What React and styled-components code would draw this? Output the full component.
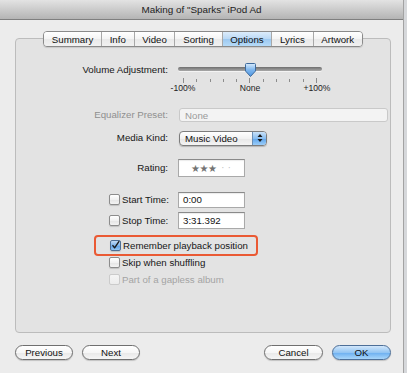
import React from 'react';
import styled, { createGlobalStyle } from 'styled-components';

const GlobalStyle = createGlobalStyle`
	html, body {
		margin: 0;
		padding: 0;
		background: #d6d8db;
	}
	body {
		font-family: "Liberation Sans", Arial, sans-serif;
		font-size: 9.7px;
		color: #161616;
	}
	* {
		box-sizing: border-box;
	}
`;

const Window = styled.div`
	width: 404px;
	height: 373px;
	background: #ececec;
	border-right: 1px solid #a3a3a3;
	display: flex;
	flex-direction: column;
`;

const TitleBar = styled.div`
	height: 20px;
	flex: none;
	display: flex;
	align-items: center;
	justify-content: center;
	background: linear-gradient(#e3e3e3, #b4b4b4);
	border-bottom: 1px solid #7f7f7f;
	color: #222;
	font-size: 9.9px;
`;

const Body = styled.div`
	padding: 11px 12px 0 15px;
	display: flex;
	flex-direction: column;
`;

const TabBar = styled.div`
	position: relative;
	z-index: 1;
	align-self: center;
	display: flex;
	height: 16px;
	margin-bottom: -9px;
	border: 1px solid #8a8a8a;
	border-radius: 4px;
	overflow: hidden;
	box-shadow: 0 1px 1px rgba(0, 0, 0, 0.12);
`;

const Tab = styled.div`
	display: flex;
	align-items: center;
	padding: 0 7.7px;
	color: #111;
	background: ${(p) =>
		p.$active
			? 'linear-gradient(#dcecfb, #b9d8f5 50%, #9cc8f0 51%, #b6dbf8)'
			: 'linear-gradient(#ffffff, #f4f4f4 50%, #e9e9e9 51%, #f1f1f1)'};
	& + & {
		border-left: 1px solid #a8a8a8;
	}
`;

const Panel = styled.div`
	height: 295px;
	background: #e3e3e3;
	border: 1px solid #bcbcbc;
	border-radius: 4px;
	padding-top: 21px;
	display: flex;
	flex-direction: column;
`;

const Row = styled.div`
	display: flex;
	align-items: ${(p) => (p.$top ? 'flex-start' : 'center')};
	height: ${(p) => p.$h}px;
	margin-top: ${(p) => p.$mt || 0}px;
`;

const Label = styled.div`
	width: 152px;
	flex: none;
	text-align: right;
	line-height: 20px;
	color: ${(p) => (p.$disabled ? '#8f8f8f' : '#161616')};
`;

const Control = styled.div`
	margin-left: ${(p) => (p.$flush ? 0 : 10)}px;
	display: flex;
	align-items: center;
`;

const Slider = styled.div`
	position: relative;
	width: 144px;
	height: 34px;
`;

const Track = styled.div`
	position: absolute;
	left: 0;
	right: 0;
	top: 7px;
	height: 4px;
	border-radius: 2px;
	background: linear-gradient(#6f6f6f, #a9a9a9);
	box-shadow: 0 1px 0 rgba(255, 255, 255, 0.6);
`;

const Knob = styled.svg`
	position: absolute;
	left: 66px;
	top: 3px;
`;

const Ticks = styled.div`
	position: absolute;
	left: 5px;
	right: 5px;
	top: 18px;
	display: flex;
	justify-content: space-between;
`;

const Tick = styled.div`
	width: 1px;
	height: ${(p) => (p.$major ? 5 : 3)}px;
	margin-top: ${(p) => (p.$major ? 0 : 1)}px;
	background: #8c8c8c;
`;

const TickLabels = styled.div`
	position: absolute;
	left: -10px;
	right: -10px;
	top: 23px;
	display: flex;
	justify-content: space-between;
	font-size: 8.6px;
	color: #222;
`;

const TickLabel = styled.span`
	width: 30px;
	text-align: center;
`;

const DisabledPopup = styled.div`
	width: 209px;
	height: 14px;
	margin-left: 1px;
	padding-left: 5px;
	display: flex;
	align-items: center;
	background: #f3f3f3;
	border: 1px solid #c9c9c9;
	border-radius: 3px;
	color: #9a9a9a;
`;

const Popup = styled.div`
	width: 88px;
	height: 15px;
	margin-left: 1px;
	display: flex;
	border: 1px solid #7c7c7c;
	border-radius: 4px;
	overflow: hidden;
	background: linear-gradient(#ffffff, #f2f2f2 50%, #e6e6e6 51%, #f4f4f4);
	box-shadow: 0 1px 1px rgba(0, 0, 0, 0.2);
`;

const PopupText = styled.div`
	flex: 1;
	display: flex;
	align-items: center;
	padding-left: 5px;
	color: #111;
`;

const PopupArrows = styled.div`
	width: 14px;
	display: flex;
	align-items: center;
	justify-content: center;
	background: linear-gradient(#c9e1f8, #88bdf0 50%, #5ea5ec 51%, #9ccdf8);
	border-left: 1px solid #6b8fb5;
`;

const Field = styled.div`
	width: 67px;
	height: ${(p) => p.$h}px;
	display: flex;
	align-items: center;
	padding-left: 4px;
	background: #ffffff;
	border: 1px solid #a9a9a9;
	border-top-color: #8a8a8a;
	box-shadow: inset 0 1px 1px rgba(0, 0, 0, 0.08);
	color: #111;
`;

const Stars = styled.span`
	margin-left: 8px;
	font-family: "DejaVu Sans", sans-serif;
	font-size: 10px;
	letter-spacing: -0.5px;
	color: #737373;
`;

const Dots = styled.span`
	margin-left: 5px;
	font-family: "DejaVu Sans", sans-serif;
	font-size: 8px;
	letter-spacing: 4px;
	color: #b9b9b9;
`;

const CheckLabel = styled.label`
	display: flex;
	align-items: center;
	gap: 2px;
	color: ${(p) => (p.$disabled ? '#a3a3a3' : '#161616')};
`;

const CheckCell = styled.div`
	width: 162px;
	flex: none;
	padding-left: 93px;
	display: flex;
	align-items: center;
`;

const Box = styled.span`
	width: 11px;
	height: 11px;
	flex: none;
	display: flex;
	align-items: center;
	justify-content: center;
	border-radius: 2px;
	border: 1px solid ${(p) => (p.$checked ? '#4f6f94' : p.$disabled ? '#cbcbcb' : '#8c8c8c')};
	background: ${(p) =>
		p.$checked
			? 'linear-gradient(#c3dcf6, #7fb5ec 50%, #5b9fe6 51%, #94c7f5)'
			: p.$disabled
			? 'linear-gradient(#f5f5f5, #ececec)'
			: 'linear-gradient(#ffffff, #f1f1f1 50%, #e4e4e4 51%, #f3f3f3)'};
	box-shadow: ${(p) => (p.$disabled ? 'none' : '0 1px 1px rgba(0, 0, 0, 0.15)')};
`;

const Highlight = styled.div`
	width: 164px;
	height: 21px;
	margin-left: 78px;
	margin-top: 6px;
	padding-left: 14px;
	display: flex;
	align-items: center;
	border: 2px solid #ea5a34;
	border-radius: 4px;
`;

const Plain = styled.div`
	padding-left: 93px;
	display: flex;
	align-items: center;
	height: ${(p) => p.$h}px;
	margin-top: ${(p) => p.$mt || 0}px;
`;

const ButtonBar = styled.div`
	margin-top: 12px;
	display: flex;
	justify-content: space-between;
`;

const Group = styled.div`
	display: flex;
	gap: 9px;
`;

const Button = styled.button`
	width: ${(p) => p.$w}px;
	height: 15px;
	padding: 0;
	font: inherit;
	color: #111;
	border-radius: 8px;
	border: 1px solid ${(p) => (p.$primary ? '#4d6f98' : '#6f6f6f')};
	background: ${(p) =>
		p.$primary
			? 'linear-gradient(#d2e7fb, #93c5f3 50%, #6aaef0 51%, #a9d6fa)'
			: 'linear-gradient(#ffffff, #f6f6f6 50%, #e8e8e8 51%, #f5f5f5)'};
	box-shadow: 0 1px 1px rgba(0, 0, 0, 0.18);
`;

function Check({ checked, disabled }) {
	return (
		<Box $checked={checked} $disabled={disabled}>
			{checked && (
				<svg width="11" height="11" viewBox="0 0 11 11">
					<path d="M2.3 5.6 L4.4 8.4 L9.6 0.8" fill="none" stroke="#1a1a1a" strokeWidth="1.7" strokeLinecap="round" strokeLinejoin="round" />
				</svg>
			)}
		</Box>
	);
}

const tabs = ['Summary', 'Info', 'Video', 'Sorting', 'Options', 'Lyrics', 'Artwork'];

export default function App() {
	const ticks = Array.from({ length: 11 }, (_, i) => i);
	return (
		<>
			<GlobalStyle />
			<Window>
				<TitleBar>Making of "Sparks" iPod Ad</TitleBar>
				<Body>
					<TabBar>
						{tabs.map((t) => (
							<Tab key={t} $active={t === 'Options'}>
								{t}
							</Tab>
						))}
					</TabBar>
					<Panel>
						<Row $h={34} $top>
							<Label>Volume Adjustment:</Label>
							<Control>
								<Slider>
									<Track />
									<Ticks>
										{ticks.map((i) => (
											<Tick key={i} $major={i === 0 || i === 5 || i === 10} />
										))}
									</Ticks>
									<TickLabels>
										<TickLabel>-100%</TickLabel>
										<TickLabel>None</TickLabel>
										<TickLabel>+100%</TickLabel>
									</TickLabels>
									<Knob width="13" height="15" viewBox="0 0 13 15">
										<defs>
											<linearGradient id="kg" x1="0" y1="0" x2="0" y2="1">
												<stop offset="0" stopColor="#d8ebfc" />
												<stop offset="0.5" stopColor="#7db6ee" />
												<stop offset="1" stopColor="#4d94e0" />
											</linearGradient>
										</defs>
										<path d="M1.5 1.5 Q1.5 0.5 2.5 0.5 H10.5 Q11.5 0.5 11.5 1.5 V8 L6.5 13.5 L1.5 8 Z" fill="url(#kg)" stroke="#3e6a9c" strokeWidth="1" />
									</Knob>
								</Slider>
							</Control>
						</Row>
						<Row $h={16} $mt={13}>
							<Label $disabled>Equalizer Preset:</Label>
							<Control>
								<DisabledPopup>None</DisabledPopup>
							</Control>
						</Row>
						<Row $h={16} $mt={7}>
							<Label>Media Kind:</Label>
							<Control>
								<Popup>
									<PopupText>Music Video</PopupText>
									<PopupArrows>
										<svg width="6" height="10" viewBox="0 0 6 10">
											<path d="M3 1 L5.5 4 H0.5 Z M3 9 L5.5 6 H0.5 Z" fill="#1b1b1b" />
										</svg>
									</PopupArrows>
								</Popup>
							</Control>
						</Row>
						<Row $h={18} $mt={13}>
							<Label>Rating:</Label>
							<Control>
								<Field $h={18}>
									<Stars>★★★</Stars>
									<Dots>··</Dots>
								</Field>
							</Control>
						</Row>
						<Row $h={17} $mt={14}>
							<CheckCell>
								<CheckLabel>
									<Check />
									Start Time:
								</CheckLabel>
							</CheckCell>
							<Control $flush>
								<Field $h={16}>0:00</Field>
							</Control>
						</Row>
						<Row $h={17} $mt={4}>
							<CheckCell>
								<CheckLabel>
									<Check />
									Stop Time:
								</CheckLabel>
							</CheckCell>
							<Control $flush>
								<Field $h={17}>3:31.392</Field>
							</Control>
						</Row>
						<Highlight>
							<CheckLabel>
								<Check checked />
								Remember playback position
							</CheckLabel>
						</Highlight>
						<Plain $h={13}>
							<CheckLabel>
								<Check />
								Skip when shuffling
							</CheckLabel>
						</Plain>
						<Plain $h={13} $mt={4}>
							<CheckLabel $disabled>
								<Check disabled />
								Part of a gapless album
							</CheckLabel>
						</Plain>
					</Panel>
					<ButtonBar>
						<Group>
							<Button $w={58}>Previous</Button>
							<Button $w={58}>Next</Button>
						</Group>
						<Group>
							<Button $w={59}>Cancel</Button>
							<Button $w={59} $primary>
								OK
							</Button>
						</Group>
					</ButtonBar>
				</Body>
			</Window>
		</>
	);
}
